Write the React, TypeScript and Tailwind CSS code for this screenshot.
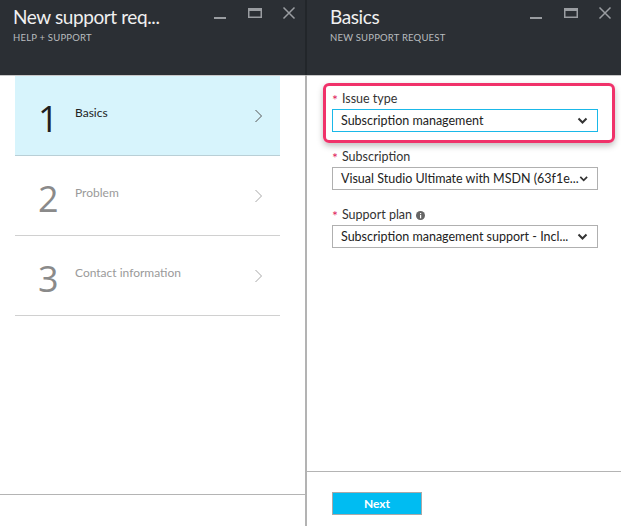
import React from "react";

const font = { fontFamily: 'Lato, "Open Sans", sans-serif' };

function WinIcons() {
  return (
    <div className="flex items-start">
      <svg width="14" height="20" viewBox="0 0 14 20" className="mt-[8px]">
        <rect x="1" y="9" width="12" height="2" fill="#9a9da1" />
      </svg>
      <svg width="16" height="14" viewBox="0 0 16 14" className="ml-[20px] mt-[6px]">
        <rect x="1.75" y="2.75" width="12.5" height="8.5" fill="none" stroke="#9a9da1" strokeWidth="1.5" />
        <rect x="1" y="2" width="14" height="3" fill="#9a9da1" />
      </svg>
      <svg width="14" height="14" viewBox="0 0 14 14" className="ml-[19px] mt-[6px]">
        <path d="M1.5 1.5 L12.5 12.5 M12.5 1.5 L1.5 12.5" stroke="#9a9da1" strokeWidth="1.5" />
      </svg>
    </div>
  );
}

function Header({ title, sub, pl }: { title: string; sub: string; pl: string }) {
  return (
    <div className={`h-[75px] bg-[#2b2f34] flex justify-between ${pl} pr-[9px]`}>
      <div className="pt-[3px]">
        <div className="text-[19px] leading-[28px] text-[#f0f0f0] tracking-[-0.4px]" style={font}>
          {title}
        </div>
        <div className="text-[9.5px] leading-[12px] mt-[1px] text-[#b9bcbf] tracking-[0.2px]" style={font}>
          {sub}
        </div>
      </div>
      <WinIcons />
    </div>
  );
}

function Chevron({ color }: { color: string }) {
  return (
    <svg width="9" height="16" viewBox="0 0 9 16">
      <path d="M1.5 2 L7.5 8 L1.5 14" fill="none" stroke={color} strokeWidth="1" />
    </svg>
  );
}

function Step({ n, label, active }: { n: string; label: string; active?: boolean }) {
  return (
    <div
      className={`h-[80px] border-b border-solid flex items-start ${
        active ? "bg-[#d7f4fc] border-[#b9cfd6]" : "bg-white border-[#d0d0d0]"
      }`}
    >
      <div
        className={`w-[60px] pl-[23px] text-[36px] leading-[36px] pt-[25px] ${
          active ? "text-[#1f1f1f]" : "text-[#8a8a8a]"
        }`}
        style={{ fontFamily: '"Open Sans", "Noto Sans", sans-serif', fontWeight: 400 }}
      >
        {n}
      </div>
      <div
        className={`text-[12px] leading-[16px] pt-[29px] flex-1 ${active ? "text-[#222]" : "text-[#9a9a9a]"}`}
        style={font}
      >
        {label}
      </div>
      <div className="pt-[32px] pr-[17px]">
        <Chevron color={active ? "#555" : "#a8a8a8"} />
      </div>
    </div>
  );
}

function Select({ value, focus }: { value: string; focus?: boolean }) {
  return (
    <div
      className={`h-[23px] w-[266px] border border-solid flex items-center justify-between pl-[8px] pr-[9px] bg-white ${
        focus ? "border-[#1ab8e8]" : "border-[#b0b0b0]"
      }`}
    >
      <span className="text-[12.5px] leading-[16px] text-[#222] whitespace-nowrap" style={font}>
        {value}
      </span>
      <svg width="11" height="8" viewBox="0 0 11 8">
        <path d="M1.5 1.5 L5.5 5.5 L9.5 1.5" fill="none" stroke="#333" strokeWidth="2" />
      </svg>
    </div>
  );
}

function Field({ label, value, focus, info }: { label: string; value: string; focus?: boolean; info?: boolean }) {
  return (
    <div className="flex flex-col">
      <div className="flex items-center h-[16px] mb-[2px]" style={font}>
        <span className="text-[#e0245e] text-[14px] leading-[16px] mr-[4px] mt-[1px]">*</span>
        <span className="text-[12.5px] leading-[16px] text-[#333]">{label}</span>
        {info && (
          <svg width="9" height="9" viewBox="0 0 9 9" className="ml-[4px]">
            <circle cx="4.5" cy="4.5" r="4.5" fill="#666" />
            <rect x="4" y="4" width="1.2" height="3.3" fill="#fff" />
            <rect x="4" y="2" width="1.2" height="1.2" fill="#fff" />
          </svg>
        )}
      </div>
      <Select value={value} focus={focus} />
    </div>
  );
}

export default function App() {
  return (
    <div className="w-[621px] h-[526px] flex bg-white overflow-hidden">
      {/* Left panel */}
      <div className="w-[305px] flex flex-col">
        <Header title="New support req..." sub="HELP + SUPPORT" pl="pl-[13px]" />
        <div className="h-[1px] bg-[#c8c8c8]" />
        <div className="flex-1 flex flex-col">
          <div className="pl-[15px] pr-[25px] flex flex-col">
            <Step n="1" label="Basics" active />
            <Step n="2" label="Problem" />
            <Step n="3" label="Contact information" />
          </div>
          <div className="flex-1" />
          <div className="h-[1px] bg-[#b4b4b4]" />
          <div className="h-[31px]" />
        </div>
      </div>
      {/* Divider */}
      <div className="w-[2px] flex flex-col">
        <div className="h-[75px] bg-[#22262a]" />
        <div className="flex-1 bg-[#b3b3b3]" />
      </div>
      {/* Right panel */}
      <div className="flex-1 flex flex-col">
        <Header title="Basics" sub="NEW SUPPORT REQUEST" pl="pl-[23px]" />
        <div className="h-[1px] bg-[#c8c8c8]" />
        <div className="flex-1 flex flex-col pl-[25px] pt-[15px]">
          <div className="relative">
            <div className="absolute left-[-9px] top-[-8px] w-[292px] h-[60px] border-[3px] border-solid border-[#f0326a] rounded-[6px] shadow-[0_3px_6px_rgba(0,0,0,0.25)]" />
            <Field label="Issue type" value="Subscription management" focus />
          </div>
          <div className="mt-[17px]">
            <Field label="Subscription" value="Visual Studio Ultimate with MSDN (63f1e..." />
          </div>
          <div className="mt-[17px]">
            <Field label="Support plan" value="Subscription management support - Incl..." info />
          </div>
          <div className="flex-1" />
        </div>
        <div className="h-[1px] bg-[#b4b4b4] ml-[0px]" />
        <div className="h-[54px] pl-[25px] pt-[20px]">
          <div
            className="w-[90px] h-[23px] bg-[#00bcf2] border border-solid border-[#a9a9a9] flex items-center justify-center text-white text-[12px] font-bold"
            style={font}
          >
            Next
          </div>
        </div>
      </div>
    </div>
  );
}
